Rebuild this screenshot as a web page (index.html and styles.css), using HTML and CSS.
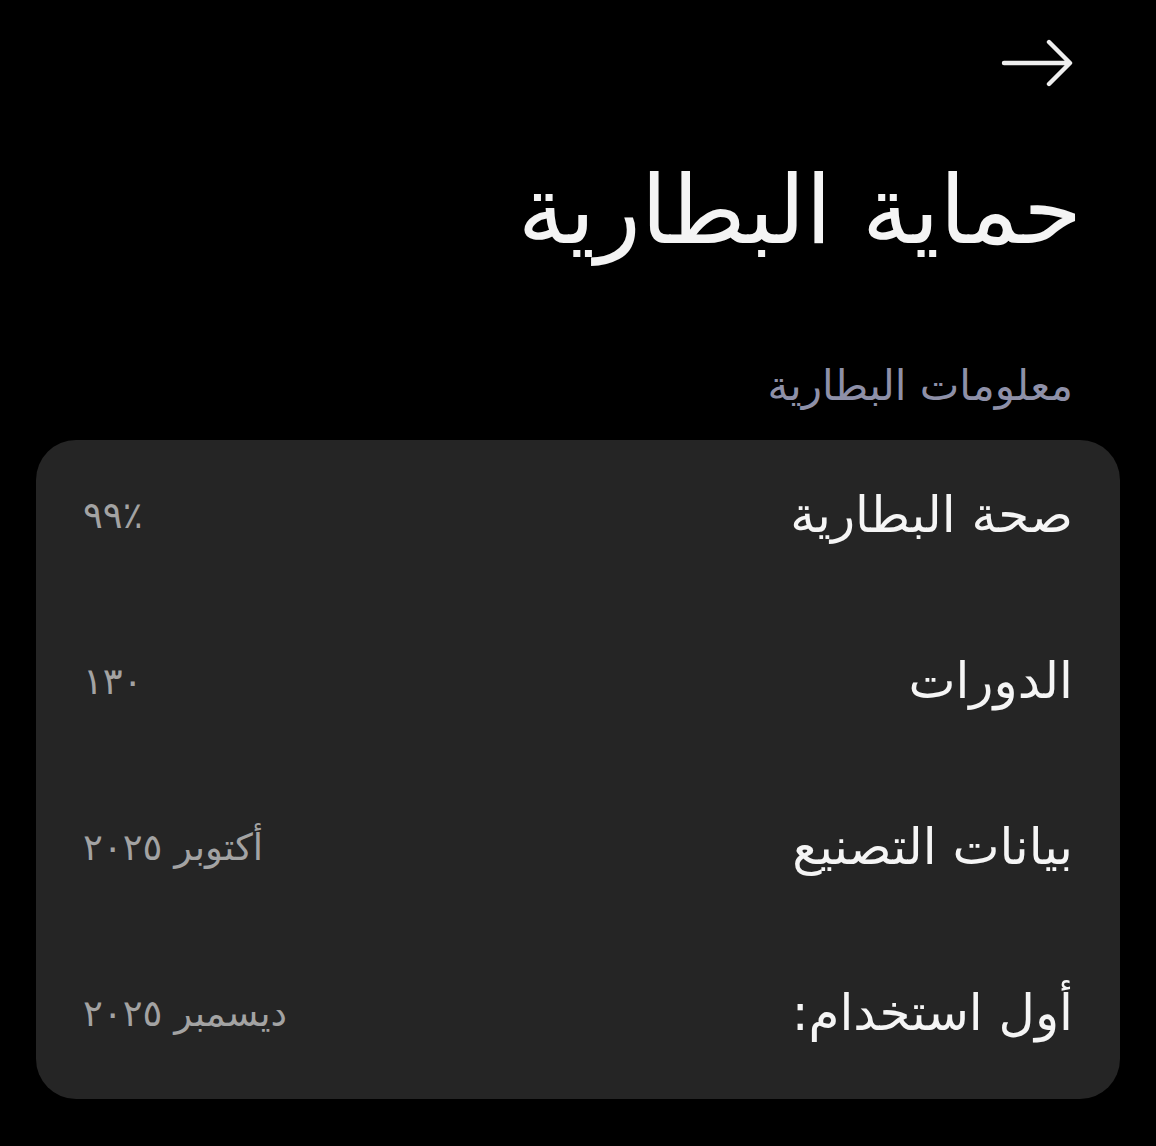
FILE: index.html
```html
<!DOCTYPE html>
<html lang="ar" dir="rtl">
<head>
<meta charset="utf-8">
<link rel="stylesheet" href="styles.css">
</head>
<body>
<div class="screen">
  <header class="topbar">
    <svg class="back" width="72" height="52" viewBox="0 0 72 52" aria-hidden="true">
      <path d="M3 26 H68 M48 5 L69 26 L48 47" fill="none" stroke="#eeeeee" stroke-width="4.4" stroke-linecap="round" stroke-linejoin="round"/>
    </svg>
  </header>
  <h1 class="title">حماية البطارية</h1>
  <h2 class="section">معلومات البطارية</h2>
  <section class="card">
    <div class="row"><span class="label">صحة البطارية</span><span class="value ltr">٩٩٪</span></div>
    <div class="row"><span class="label">الدورات</span><span class="value">١٣٠</span></div>
    <div class="row"><span class="label">بيانات التصنيع</span><span class="value">أكتوبر ٢٠٢٥</span></div>
    <div class="row"><span class="label">أول استخدام:</span><span class="value">ديسمبر ٢٠٢٥</span></div>
  </section>
</div>
</body>
</html>
```
FILE: styles.css
```css
html, body {
  margin: 0;
  padding: 0;
  background: #000;
}
body {
  font-family: "DejaVu Sans", "Noto Sans", sans-serif;
  color: #f2f2f2;
  width: 1156px;
  height: 1146px;
  overflow: hidden;
}
.screen {
  display: flex;
  flex-direction: column;
  padding: 0 36px;
}
.topbar {
  display: flex;
  justify-content: flex-start;
  padding: 37px 47px 0 0;
  height: 55px;
}
.back {
  display: block;
}
.title {
  margin: 58px 38px 0 0;
  font-size: 95px;
  font-weight: normal;
  line-height: 120px;
  color: #f4f4f4;
}
.section {
  margin: 86px 47px 0 0;
  font-size: 42px;
  font-weight: normal;
  line-height: 60px;
  color: #8e90a8;
}
.card {
  margin-top: 24px;
  background: #252525;
  border-radius: 40px;
  padding: 0 47px 11px 47px;
  display: flex;
  flex-direction: column;
  gap: 16px;
}
.row {
  display: flex;
  justify-content: space-between;
  align-items: center;
  height: 150px;
}
.label {
  font-size: 50px;
  color: #f5f5f5;
}
.value {
  font-size: 37px;
  color: #a3a3a3;
}
.ltr {
  direction: ltr;
  unicode-bidi: isolate;
}
```
